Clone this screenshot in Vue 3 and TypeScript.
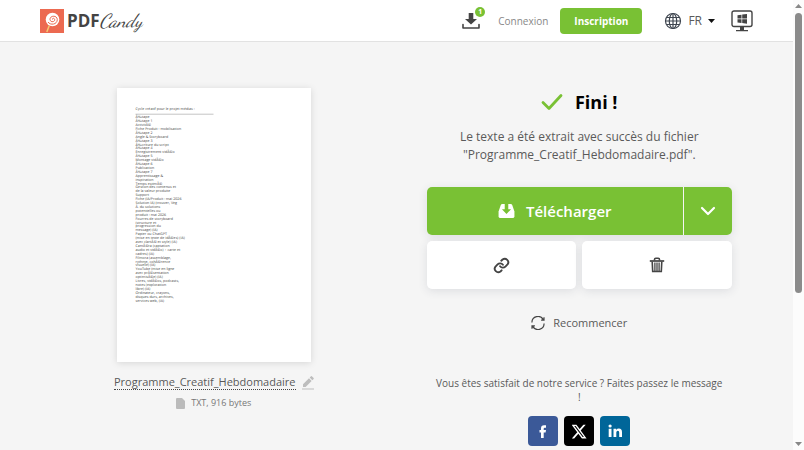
<script setup lang="ts">
import { ref } from 'vue'

interface Social {
  name: string
  kind: 'facebook' | 'x' | 'linkedin'
}

const fileName = ref('Programme_Creatif_Hebdomadaire')
const language = ref('FR')

const socials: Social[] = [
  { name: 'Facebook', kind: 'facebook' },
  { name: 'X', kind: 'x' },
  { name: 'LinkedIn', kind: 'linkedin' },
]

const previewTitle = 'Cycle créatif pour le projet médias :'
const previewLines: string[] = [
  'Ã‰tape', 'Ã‰tape 1', 'ActivitÃ©', 'Fiche Produit : mobilisation', 'Ã‰tape 2',
  'Angle & Storyboard', 'Ã‰tape 3', 'Ã‰criture du script', 'Ã‰tape 4',
  'Enregistrement vidÃ©o', 'Ã‰tape 5', 'Montage vidÃ©o', 'Ã‰tape 6', 'Publication',
  'Ã‰tape 7', 'Apprentissage &', 'inspiration', 'Temps estimÃ©', 'Gestion des contenus et',
  'de la valeur produite', 'Support', 'Fiche (IA/Produit : mai 2026', 'Solution IA) (trouver, Veg',
  'Ã. du solutions', 'potentielles ou', 'produit : mai 2026', 'Fourres de storyboard',
  '(structure et', 'progression du', 'message) (IA)', 'Papier ou ChatGPT',
  '(mise en texte de idÃ©es) (IA)', 'avec clartÃ© et style) (IA)', 'CamÃ©ra (captation',
  'audio et vidÃ©o) + carte et', 'cadres) (IA)', 'Filmora (assemblage,', 'rythme, cohÃ©rence',
  'visuelle) (IA)', 'YouTube (mise en ligne', 'avec prÃ©sentation', 'optimisÃ©e) (IA)',
  'Livres, vidÃ©os, podcasts,', 'notes (exploration', 'libre) (IA)', 'Ordinateur, crayons,',
  'disques durs, archives,', 'services web, (IA)',
]
</script>

<template>
  <div class="window">
    <div class="page">
      <header class="topbar">
        <a class="logo" href="#" aria-label="PDF Candy">
          <svg class="logo-mark" viewBox="0 0 24 24" aria-hidden="true">
            <rect width="24" height="24" fill="#ec6a51" />
            <path d="M9.300 16.500L6.800 23" stroke="#f5ca72" stroke-width="1.500" />
            <circle cx="12.500" cy="10.500" r="6.800" fill="#fff" />
            <path d="M12.500 10.500c-.5-1.600 2-1.700 2.200.1.300 2.600-4.500 3-4.700-.1-.2-4.300 7.200-4.500 7.300.1 0 5-7 6-9.300 2.400" fill="none" stroke="#ec6a51" stroke-width="1" />
          </svg>
          <span class="logo-pdf">PDF</span><span class="logo-candy">Candy</span>
        </a>
        <nav class="menu">
          <button class="tray" type="button" aria-label="Fichiers">
            <svg width="18" height="18" viewBox="0 0 18 18" aria-hidden="true">
              <path d="M6.700 1h4.600v6h3.700L9 12.500 3 7h3.700z" fill="#444" />
              <path d="M1 12.500V16h16v-3.500" fill="none" stroke="#444" stroke-width="1.600" stroke-linejoin="round" stroke-linecap="round" />
            </svg>
            <span class="badge">1</span>
          </button>
          <a class="login" href="#">Connexion</a>
          <a class="signup" href="#">Inscription</a>
          <button class="language" type="button">
            <svg width="18" height="18" viewBox="0 0 18 18" fill="none" stroke="#3f4650" stroke-width="1.200" aria-hidden="true">
              <circle cx="9" cy="9" r="7.500" />
              <ellipse cx="9" cy="9" rx="3.700" ry="7.500" />
              <path d="M9 1.500v15M1.500 9h15M2.500 5.500h13M2.500 12.500h13" />
            </svg>
            <span>{{ language }}</span>
            <svg class="caret" width="7" height="4" viewBox="0 0 7 4" aria-hidden="true"><path d="M0 0h7L3.500 4z" fill="#111" /></svg>
          </button>
          <a class="desktop" href="#" aria-label="Version Windows">
            <svg width="22" height="22" viewBox="0 0 22 22" aria-hidden="true">
              <rect x="1" y="1" width="20" height="15.500" rx="2" fill="none" stroke="#444" stroke-width="1.400" />
              <path d="M9 17h4v3h4v1.300H5V20h4z" fill="#444" />
              <path d="M6.500 5.300l4-.6v3.800h-4zM11.200 4.600l4.800-.7v4.600h-4.800zM6.500 9.200h4V13l-4-.6zM11.200 9.200H16v4.600l-4.800-.7z" fill="#444" />
            </svg>
          </a>
        </nav>
      </header>

      <main class="content">
        <section class="preview">
          <svg class="sheet" viewBox="0 0 1940 2740" role="img" aria-label="Aperçu du fichier">
            <rect width="1940" height="2740" fill="#fff" />
            <g class="sheet-text">
              <text x="185" y="222">{{ previewTitle }}</text>
              <path d="M185 262H965" stroke="#aaa" stroke-width="7" />
              <text v-for="(line, i) in previewLines" :key="i" x="185" :y="302 + i * 39">{{ line }}</text>
            </g>
          </svg>
          <div class="file-row">
            <a class="file-name" href="#">{{ fileName }}</a>
            <button class="edit" type="button" aria-label="Renommer">
              <svg width="12" height="14" viewBox="0 0 12 14" fill="#bdbdbd" aria-hidden="true">
                <path d="M1 8.300L7 2.300l2.600 2.600-6 6H1zM7.700 1.600L9 .3q.4-.4.800 0l1.800 1.800q.4.400 0 .8l-1.300 1.300zM0 12.500h12v1H0z" />
              </svg>
            </button>
          </div>
          <p class="file-info">
            <svg width="9" height="11" viewBox="0 0 9 11" aria-hidden="true"><path d="M1 0h5l3 3v7q0 1-1 1H1q-1 0-1-1V1q0-1 1-1z" fill="#bbb" /></svg>
            <span>TXT, 916 bytes</span>
          </p>
        </section>

        <section class="result">
          <h1 class="title">
            <svg width="22" height="18" viewBox="0 0 22 18" aria-hidden="true"><path d="M2 9.500l6 6L20 2.500" fill="none" stroke="#79c134" stroke-width="2.800" stroke-linecap="round" stroke-linejoin="round" /></svg>
            <span>Fini !</span>
          </h1>
          <p class="message">Le texte a été extrait avec succès du fichier "{{ fileName }}.pdf".</p>

          <div class="actions">
            <div class="download">
              <button class="download-main" type="button">
                <svg width="17" height="14" viewBox="0 0 17 15" aria-hidden="true">
                  <path d="M4 0h9q1.200 0 1.600 1L17 8v5q0 2-2 2H2q-2 0-2-2V8L2.400 1Q2.800 0 4 0z" fill="#fff" />
                  <path d="M6.600 0h3.800v5.500h3L8.500 10.800 3.600 5.500h3z" fill="#79c134" />
                  <path d="M7.500 0h2v6.500h2L8.500 9.700 5.500 6.500h2z" fill="#79c134" />
                  <path d="M7.700 2.500h1.600v4.200h1.500L8.500 9.200 6.200 6.700h1.500z" fill="#79c134" />
                </svg>
                <span>Télécharger</span>
              </button>
              <button class="download-more" type="button" aria-label="Plus d'options">
                <svg width="16" height="10" viewBox="0 0 16 10" aria-hidden="true"><path d="M2 2l6 6 6-6" fill="none" stroke="#fff" stroke-width="2.200" stroke-linecap="round" stroke-linejoin="round" /></svg>
              </button>
            </div>
            <div class="tools">
              <button class="tool" type="button" aria-label="Copier le lien">
                <svg width="17" height="17" viewBox="0 0 24 24" fill="none" stroke="#444" stroke-width="2.700" stroke-linecap="round" stroke-linejoin="round" aria-hidden="true">
                  <path d="M10 13a5 5 0 0 0 7.500.5l3-3a5 5 0 0 0-7-7L11.700 5.200" />
                  <path d="M14 11a5 5 0 0 0-7.500-.5l-3 3a5 5 0 0 0 7 7l1.700-1.700" />
                </svg>
              </button>
              <button class="tool" type="button" aria-label="Supprimer">
                <svg width="16" height="16" viewBox="0 0 16 16" fill="none" stroke="#444" aria-hidden="true">
                  <path d="M.8 4h14.400" stroke-width="1.700" />
                  <path d="M5.500 3.500V2.600q0-1.300 1.300-1.300h2.400q1.300 0 1.300 1.300v.9M3.200 4.500l.5 10h8.600l.5-10" stroke-width="1.600" />
                  <path d="M5.900 5.500v8.500M8 5.500v8.500M10.100 5.500v8.500" stroke-width="1.300" />
                </svg>
              </button>
            </div>
          </div>

          <a class="restart" href="#">
            <svg width="14" height="14" viewBox="0 0 14 14" fill="none" stroke="#444" stroke-width="1.200" aria-hidden="true">
              <path d="M.9 6.500A6.100 6.100 0 0 1 12.300 3.600M13.100 7.500A6.100 6.100 0 0 1 1.700 10.400M13 1.200v2.900h-2.900M1 12.800V9.900h2.900" />
            </svg>
            <span>Recommencer</span>
          </a>

          <p class="share-text">Vous êtes satisfait de notre service ? Faites passez le message<br />!</p>
          <div class="socials">
            <a v-for="s in socials" :key="s.kind" href="#" class="social" :class="s.kind" :aria-label="s.name">
              <svg v-if="s.kind === 'facebook'" width="8" height="13" viewBox="0 0 8 13" aria-hidden="true"><path d="M2 13V7.500H.5V5H2V3.500Q2 .3 5 .3h2v2.400H5.700q-1 0-1 1V5H7l-.4 2.500H4.700V13z" fill="#fff" /></svg>
              <svg v-else-if="s.kind === 'x'" width="15" height="15" viewBox="0 0 24 24" aria-hidden="true"><path d="M18.200 1h3.700l-8 9.200L23.300 23h-7.400l-5.800-7.600L3.500 23H-.2l8.600-9.900L-.6 1H7l5.200 7zM17 20.800h2L5.800 3.100H3.600z" fill="#fff" /></svg>
              <svg v-else width="15" height="14" viewBox="0 0 15 14" aria-hidden="true"><path d="M.7 4.700h2.800V13H.7zM5.500 4.700h2.700v1.200q.8-1.400 2.700-1.400Q14 4.500 14 8.200V13h-2.800V8.600q0-1.800-1.400-1.800T8.300 8.600V13H5.500z" fill="#fff" /><circle cx="2.100" cy="2" r="1.600" fill="#fff" /></svg>
            </a>
          </div>
        </section>
      </main>
    </div>

    <div class="scrollbar" aria-hidden="true">
      <svg width="7" height="4" viewBox="0 0 7 4"><path d="M0 4h7L3.500 0z" fill="#888" /></svg>
      <div class="track"><div class="thumb"></div></div>
      <svg width="7" height="4" viewBox="0 0 7 4"><path d="M0 0h7L3.500 4z" fill="#888" /></svg>
    </div>
  </div>
</template>

<style>
body {
  background: #f5f5f5;
}
</style>

<style scoped>
.window {
  display: grid;
  grid-template-columns: minmax(0, 1fr) 11px;
  height: 100vh;
  overflow: hidden;
  font-family: 'Open Sans', 'Noto Sans', sans-serif;
  color: #5a5a5a;
}

.window * {
  box-sizing: border-box;
}

button {
  border: 0;
  padding: 0;
  background: none;
  font: inherit;
  color: inherit;
  cursor: pointer;
}

a {
  color: inherit;
  text-decoration: none;
}

p,
h1 {
  margin: 0;
}

svg {
  flex: none;
}

.page {
  overflow: hidden;
  background: #f5f5f5;
}

.topbar {
  display: flex;
  align-items: center;
  justify-content: space-between;
  height: 42px;
  padding: 0 40px;
  background: #fff;
  border-bottom: 1px solid #e2e2e2;
}

.logo {
  display: flex;
  align-items: center;
  color: #444;
}

.logo-mark {
  width: 24px;
  height: 24px;
  margin-right: 3px;
}

.logo-pdf {
  font-size: 17px;
  line-height: 24px;
  font-weight: 700;
}

.logo-candy {
  font-family: 'Dancing Script', 'Liberation Serif', serif;
  font-size: 19px;
  line-height: 24px;
  font-style: italic;
}

.menu {
  display: flex;
  align-items: center;
}

.tray {
  position: relative;
  display: flex;
  margin-right: 18px;
}

.badge {
  position: absolute;
  top: -5px;
  right: -5px;
  width: 10px;
  height: 10px;
  border-radius: 50%;
  background: #79c134;
  color: #fff;
  font-size: 7px;
  line-height: 10px;
  font-weight: 700;
  text-align: center;
}

.login {
  margin-right: 12px;
  font-size: 10px;
  color: #888;
}

.signup {
  width: 82px;
  margin-right: 22px;
  border-radius: 4px;
  background: #79c134;
  color: #fff;
  font-size: 10px;
  line-height: 26px;
  font-weight: 700;
  text-align: center;
}

.language {
  display: flex;
  align-items: center;
  gap: 6px;
  margin-right: 16px;
  font-size: 12px;
}

.desktop {
  display: flex;
}

.content {
  display: grid;
  grid-template-columns: 1fr 1fr;
  padding: 46px 31px 0;
}

.preview {
  display: flex;
  flex-direction: column;
  align-items: center;
}

.sheet {
  display: block;
  width: 194px;
  max-width: 100%;
  box-shadow: 0 1px 7px rgba(0, 0, 0, 0.13);
}

.sheet-text {
  font-size: 36px;
  fill: #444;
  text-rendering: geometricPrecision;
}

.file-row {
  display: flex;
  align-items: center;
  gap: 6px;
  margin-top: 13px;
}

.file-name {
  border-bottom: 1px dotted #444;
  font-size: 11px;
  line-height: 14px;
}

.edit {
  display: flex;
}

.file-info {
  display: flex;
  align-items: center;
  gap: 6px;
  margin-top: 6px;
  color: #777;
  font-size: 9px;
  line-height: 14px;
}

.result {
  display: flex;
  flex-direction: column;
  align-items: center;
  padding: 0 30px;
}

.title {
  display: flex;
  align-items: center;
  gap: 12px;
  color: #000;
  font-size: 18px;
  line-height: 28px;
  font-weight: 700;
}

.message {
  max-width: 260px;
  margin-top: 12px;
  font-size: 12px;
  line-height: 18px;
  text-align: center;
}

.actions {
  display: flex;
  flex-direction: column;
  gap: 6px;
  width: 100%;
  margin-top: 23px;
}

.download {
  display: flex;
  gap: 1px;
  border-radius: 5px;
  box-shadow: 0 2px 10px rgba(50, 60, 80, 0.12);
}

.download-main,
.download-more {
  display: flex;
  align-items: center;
  justify-content: center;
  height: 48px;
  background: #79c134;
  color: #fff;
}

.download-main {
  flex: 1;
  gap: 11px;
  border-radius: 5px 0 0 5px;
  font-size: 15px;
  font-weight: 600;
}

.download-more {
  width: 48px;
  border-radius: 0 5px 5px 0;
}

.tools {
  display: grid;
  grid-template-columns: 1fr 1fr;
  gap: 6px;
}

.tool {
  display: flex;
  align-items: center;
  justify-content: center;
  height: 48px;
  border-radius: 5px;
  background: #fff;
  box-shadow: 0 2px 10px rgba(50, 60, 80, 0.12);
}

.restart {
  display: flex;
  align-items: center;
  gap: 8px;
  margin-top: 26px;
  font-size: 11px;
  line-height: 16px;
}

.share-text {
  margin-top: 45px;
  font-size: 10px;
  line-height: 14px;
  text-align: center;
}

.socials {
  display: flex;
  gap: 6px;
  margin-top: 12px;
}

.social {
  display: flex;
  align-items: center;
  justify-content: center;
  width: 30px;
  height: 30px;
  border-radius: 4px;
}

.facebook {
  background: #3b5998;
}

.x {
  background: #000;
}

.linkedin {
  background: #006699;
}

.scrollbar {
  display: flex;
  flex-direction: column;
  align-items: center;
  gap: 5px;
  padding: 4px 0;
  background: #fcfcfc;
}

.track {
  flex: 1;
  width: 7px;
}

.thumb {
  height: 66%;
  border-radius: 4px;
  background: #8b8b8b;
}
</style>
